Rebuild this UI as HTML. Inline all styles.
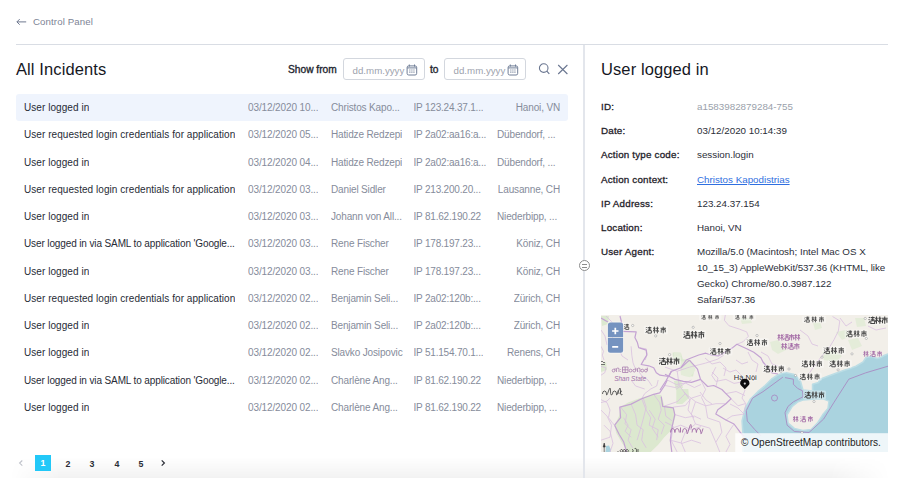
<!DOCTYPE html>
<html><head><meta charset="utf-8">
<style>
*{box-sizing:border-box;margin:0;padding:0}
html,body{width:900px;height:478px;overflow:hidden;background:#fff}
body{position:relative;font-family:"Liberation Sans",sans-serif;color:#272b36}
.abs{position:absolute;white-space:nowrap}
#back{left:16px;top:15.3px;font-size:9.7px;letter-spacing:0.1px;color:#7d8495;line-height:14px}
#back svg{position:absolute;left:0;top:2px}
#back span{position:absolute;left:17px;top:0}
#hr{left:16px;top:44px;width:872px;height:1px;background:#d9dde4}
#vr{left:583px;top:45px;width:2px;height:433px;background:#e3e6ec}
#handle{left:579px;top:260px;width:11px;height:11px;border:1px solid #8c8c8c;border-radius:50%;background:#fff}
#handle:before,#handle:after{content:"";position:absolute;left:2px;width:5px;height:1px;background:#8c8c8c}
#handle:before{top:3px}#handle:after{top:6px}
h1{position:absolute;font-weight:normal;font-size:16.5px;letter-spacing:0.1px;color:#16181f;line-height:20px;white-space:nowrap}
#t1{left:16px;top:59px}
#t2{left:601px;top:59px}
#showfrom{left:288px;top:64px;font-size:10.2px;color:#23262f;line-height:12px;-webkit-text-stroke:0.35px #23262f}
#to{left:430px;top:64px;font-size:10.2px;color:#23262f;line-height:12px;-webkit-text-stroke:0.35px #23262f}
.inp{position:absolute;top:58px;width:82px;height:22px;border:1px solid #d3d7de;border-radius:3px;background:#fff}
.inp span{position:absolute;left:8.6px;top:5.6px;font-size:9.7px;color:#9da2ad;line-height:12px}
.inp svg{position:absolute;left:61.8px;top:4.6px}
#inp1{left:343px}#inp2{left:444px}
.row{position:absolute;left:16px;width:552px;height:27px;font-size:10px;line-height:27px;border-radius:3px}
.row.sel{background:#eff4fd}
.row div{position:absolute;top:0;white-space:nowrap;overflow:hidden}
.c1{left:8px;color:#272b36;letter-spacing:0.06px}
.c2{left:232px;color:#868c9b;letter-spacing:-0.12px}
.c3{left:315px;color:#868c9b;letter-spacing:-0.15px}
.c4{left:397.5px;color:#868c9b;letter-spacing:-0.2px}
.c5{right:8px;color:#868c9b;text-align:right;letter-spacing:-0.15px}
.c5.tr{right:auto;left:481px;text-align:left}
#pag{left:0;top:455px;height:16px;width:200px}
.pg{position:absolute;top:455.5px;width:16px;height:16px;line-height:16px;text-align:center;font-size:8.8px;font-weight:bold;color:#2a2d36}
.pg.act{background:#22c8f8;color:#fff;top:455px}
.lbl{position:absolute;left:601px;font-size:9.8px;letter-spacing:0.2px;color:#1f222a;line-height:12px;white-space:nowrap;-webkit-text-stroke:0.3px #1f222a}
.val{position:absolute;left:697px;font-size:9.8px;color:#2b2e38;line-height:16px;white-space:nowrap}
#map{position:absolute;left:601px;top:315px;width:287px;height:137px;overflow:hidden;background:#f2efe9}
#shade{left:10px;top:457px;width:880px;height:21px;background:linear-gradient(rgba(0,0,0,0),rgba(0,0,0,0.05));-webkit-mask-image:linear-gradient(to right,transparent,#000 50px,#000 820px,transparent);mask-image:linear-gradient(to right,transparent,#000 50px,#000 820px,transparent)}
</style></head><body>
<div id="shade" class="abs"></div>
<div id="back" class="abs"><svg width="11" height="10" viewBox="0 0 11 10"><path d="M3.7 2.1L0.9 4.9L3.7 7.7M0.9 4.9H10.2" fill="none" stroke="#6f7890" stroke-width="1"/></svg><span>Control Panel</span></div>
<div id="hr" class="abs"></div>
<div id="vr" class="abs"></div>
<div id="handle" class="abs"></div>

<h1 id="t1">All Incidents</h1>
<div id="showfrom" class="abs">Show from</div>
<div class="inp" id="inp1"><span>dd.mm.yyyy</span><svg width="12" height="12" viewBox="0 0 12 12"><rect x="1.1" y="1.9" width="9.6" height="9.1" rx="1.6" fill="none" stroke="#6f7d96" stroke-width="1"/><path d="M1.1 3.9H10.7M3.3 0.5V2.6M8.5 0.5V2.6" stroke="#6f7d96" stroke-width="1"/><path d="M3.3 5.4h1.1v1.1h-1.1zM5.35 5.4h1.1v1.1h-1.1zM7.4 5.4h1.1v1.1h-1.1zM3.3 7.6h1.1v1.1h-1.1zM5.35 7.6h1.1v1.1h-1.1zM7.4 7.6h1.1v1.1h-1.1z" fill="#6f7d96"/></svg></div>
<div id="to" class="abs">to</div>
<div class="inp" id="inp2"><span>dd.mm.yyyy</span><svg width="12" height="12" viewBox="0 0 12 12"><rect x="1.1" y="1.9" width="9.6" height="9.1" rx="1.6" fill="none" stroke="#6f7d96" stroke-width="1"/><path d="M1.1 3.9H10.7M3.3 0.5V2.6M8.5 0.5V2.6" stroke="#6f7d96" stroke-width="1"/><path d="M3.3 5.4h1.1v1.1h-1.1zM5.35 5.4h1.1v1.1h-1.1zM7.4 5.4h1.1v1.1h-1.1zM3.3 7.6h1.1v1.1h-1.1zM5.35 7.6h1.1v1.1h-1.1zM7.4 7.6h1.1v1.1h-1.1z" fill="#6f7d96"/></svg></div>
<svg class="abs" style="left:538px;top:62px" width="14" height="14" viewBox="0 0 14 14"><circle cx="5.7" cy="6.1" r="4.3" fill="none" stroke="#6a7690" stroke-width="1.1"/><path d="M8.8 9.2L11.3 11.9" stroke="#6a7690" stroke-width="1.2"/></svg>
<svg class="abs" style="left:557px;top:64px" width="11" height="11" viewBox="0 0 11 11"><path d="M1.2 1L10.4 10M10.4 1L1.2 10" stroke="#6a7690" stroke-width="1.1"/></svg>

<div id="rows">
<div class="row sel" style="top:94.00px"><div class="c1">User logged in</div><div class="c2">03/12/2020 10...</div><div class="c3">Christos Kapo...</div><div class="c4">IP 123.24.37.1...</div><div class="c5">Hanoi, VN</div></div>
<div class="row" style="top:121.27px"><div class="c1">User requested login credentials for application</div><div class="c2">03/12/2020 05...</div><div class="c3">Hatidze Redzepi</div><div class="c4">IP 2a02:aa16:a...</div><div class="c5 tr">Dübendorf, ...</div></div>
<div class="row" style="top:148.54px"><div class="c1">User logged in</div><div class="c2">03/12/2020 04...</div><div class="c3">Hatidze Redzepi</div><div class="c4">IP 2a02:aa16:a...</div><div class="c5 tr">Dübendorf, ...</div></div>
<div class="row" style="top:175.81px"><div class="c1">User requested login credentials for application</div><div class="c2">03/12/2020 03...</div><div class="c3">Daniel Sidler</div><div class="c4">IP 213.200.20...</div><div class="c5">Lausanne, CH</div></div>
<div class="row" style="top:203.08px"><div class="c1">User logged in</div><div class="c2">03/12/2020 03...</div><div class="c3">Johann von All...</div><div class="c4">IP 81.62.190.22</div><div class="c5 tr">Niederbipp, ...</div></div>
<div class="row" style="top:230.35px"><div class="c1" style="letter-spacing:-0.12px">User logged in via SAML to application 'Google...</div><div class="c2">03/12/2020 03...</div><div class="c3">Rene Fischer</div><div class="c4">IP 178.197.23...</div><div class="c5">Köniz, CH</div></div>
<div class="row" style="top:257.62px"><div class="c1">User logged in</div><div class="c2">03/12/2020 03...</div><div class="c3">Rene Fischer</div><div class="c4">IP 178.197.23...</div><div class="c5">Köniz, CH</div></div>
<div class="row" style="top:284.89px"><div class="c1">User requested login credentials for application</div><div class="c2">03/12/2020 02...</div><div class="c3">Benjamin Seli...</div><div class="c4">IP 2a02:120b:...</div><div class="c5">Zürich, CH</div></div>
<div class="row" style="top:312.16px"><div class="c1">User logged in</div><div class="c2">03/12/2020 02...</div><div class="c3">Benjamin Seli...</div><div class="c4">IP 2a02:120b:...</div><div class="c5">Zürich, CH</div></div>
<div class="row" style="top:339.43px"><div class="c1">User logged in</div><div class="c2">03/12/2020 02...</div><div class="c3">Slavko Josipovic</div><div class="c4">IP 51.154.70.1...</div><div class="c5">Renens, CH</div></div>
<div class="row" style="top:366.70px"><div class="c1" style="letter-spacing:-0.12px">User logged in via SAML to application 'Google...</div><div class="c2">03/12/2020 02...</div><div class="c3">Charlène Ang...</div><div class="c4">IP 81.62.190.22</div><div class="c5 tr">Niederbipp, ...</div></div>
<div class="row" style="top:393.97px"><div class="c1">User logged in</div><div class="c2">03/12/2020 02...</div><div class="c3">Charlène Ang...</div><div class="c4">IP 81.62.190.22</div><div class="c5 tr">Niederbipp, ...</div></div>
</div>

<h1 id="t2">User logged in</h1>
<div class="lbl" style="top:101.31px">ID:</div><div class="val" style="top:99.31px;color:#9a9fab">a1583982879284-755</div>
<div class="lbl" style="top:125.39px">Date:</div><div class="val" style="top:123.39px;">03/12/2020 10:14:39</div>
<div class="lbl" style="top:149.47px">Action type code:</div><div class="val" style="top:147.47px;">session.login</div>
<div class="lbl" style="top:173.55px">Action context:</div><div class="val" style="top:171.55px;color:#2f6fe0;text-decoration:underline">Christos Kapodistrias</div>
<div class="lbl" style="top:197.63px">IP Address:</div><div class="val" style="top:195.63px;">123.24.37.154</div>
<div class="lbl" style="top:221.71px">Location:</div><div class="val" style="top:219.71px;">Hanoi, VN</div>
<div class="lbl" style="top:245.79px">User Agent:</div><div class="val" style="top:243.79px;">Mozilla/5.0 (Macintosh; Intel Mac OS X<br><span style="letter-spacing:-0.1px">10_15_3) AppleWebKit/537.36 (KHTML, like</span><br>Gecko) Chrome/80.0.3987.122<br>Safari/537.36</div>
<div id="map"><svg width="287" height="137" viewBox="601 315 287 137" style="position:absolute;left:0;top:0">
<rect x="601" y="315" width="287" height="137" fill="#f2efe9"/>
<polygon points="614.6,425.2 619.1,416.1 620.6,407.1 628.1,402.6 640.2,398.1 653.7,394.3 661.2,395.1 664.3,405.6 673.3,407.1 675.5,416.1 671.8,429.7 664.3,437.2 658.2,444.8 650.7,452.0 628.1,452.0 622.1,443.3 616.1,432.7" fill="#dce8cf"/>
<polygon points="676.3,389.0 688.3,389.0 689.1,398.1 682.3,404.1 676.3,404.1" fill="#dce9d0"/>
<polygon points="672.6,352.6 681.0,353.0 683.0,360.0 678.0,362.0 673.0,358.0" fill="#dce9d0"/>
<polygon points="681.0,358.9 690.0,360.0 694.8,368.0 693.0,376.5 684.0,376.0 681.0,370.0" fill="#dce9d0"/>
<polygon points="673.8,381.0 681.0,380.2 683.0,388.0 676.0,390.0" fill="#dce9d0"/>
<polygon points="601.0,316.0 609.0,316.0 608.0,324.0 602.0,326.0" fill="#dce9d0"/>
<polygon points="601.0,365.0 606.0,362.0 607.0,370.0 601.0,372.0" fill="#dce9d0"/>
<polygon points="836.0,332.0 846.0,330.0 850.0,336.0 842.0,340.0" fill="#e4ecd9"/>
<polygon points="822.0,352.0 834.0,350.0 842.0,356.0 836.0,362.0 824.0,360.0" fill="#e4ecd9"/>
<polygon points="848.0,340.0 858.0,338.0 862.0,346.0 852.0,350.0" fill="#e4ecd9"/>
<polygon points="770.0,342.0 778.0,340.0 786.0,350.0 778.0,354.0 772.0,350.0" fill="#e4ecd9"/>
<polygon points="813.0,323.0 820.0,322.0 822.0,328.0 815.0,330.0" fill="#e4ecd9"/>
<polygon points="855.0,318.0 864.0,318.0 866.0,326.0 857.0,327.0" fill="#e4ecd9"/>
<polygon points="740.0,318.0 750.0,318.0 752.0,323.0 742.0,324.0" fill="#e4ecd9"/>
<polygon points="679.2,361.1 690.0,362.0 695.5,370.0 690.0,377.3 681.0,375.0" fill="#e4ecd9"/>
<polygon points="673.8,352.3 680.9,352.5 680.9,356.8 674.0,356.8" fill="#e4ecd9"/>
<polygon points="743.0,452.0 743.1,435.7 742.1,421.0 745.2,408.5 750.5,399.0 757.8,391.7 765.1,385.5 771.4,379.2 777.7,375.0 785.0,372.5 793.4,374.2 795.5,375.5 799.2,379.2 800.0,379.6 801.3,384.2 803.0,390.1 812.6,391.0 812.6,384.2 818.5,382.6 820.1,379.2 828.5,375.9 835.2,373.4 845.0,370.0 848.6,369.0 855.9,366.2 863.2,361.9 866.0,357.5 872.0,356.5 877.0,358.5 880.8,357.5 884.0,355.5 888.0,354.0 889.0,354.0 889.0,453.0 743.0,453.0" fill="#aad3df" stroke="#bcdde5" stroke-width="1.6" stroke-linejoin="round"/>
<polygon points="802.8,400.1 815.3,399.1 823.7,399.1 828.9,401.2 827.9,408.5 822.6,414.8 817.4,423.1 811.1,429.4 802.8,430.5 794.4,428.4 788.1,423.1 787.1,414.8 792.3,406.4 797.5,402.2" fill="#f2efe9" stroke="#bcdde5" stroke-width="1.4" stroke-linejoin="round"/>
<polygon points="606,446 609,445.5 611,450 610.5,452 605.5,452" fill="#aad3df"/>
<path d="M631.1 346.3 L631.8 355.1 L633.0 362.7 L634.9 367.7 L638.7 371.4 L642.0 376.0 L648.0 380.0 L652.0 386.0" fill="none" stroke="#d9c0e0" stroke-width="0.8"/>
<path d="M601.0 346.3 L603.5 351.3 L602.3 355.1 L604.0 360.0" fill="none" stroke="#d9c0e0" stroke-width="0.8"/>
<path d="M601.0 366.4 L606.0 367.7 L604.8 372.7 L601.0 375.2" fill="none" stroke="#d9c0e0" stroke-width="0.8"/>
<path d="M601.0 330.0 L605.0 336.0 L607.0 345.0" fill="none" stroke="#d9c0e0" stroke-width="0.8"/>
<path d="M640.0 347.9 L646.2 348.8 L647.1 354.1 L645.3 360.0" fill="none" stroke="#d9c0e0" stroke-width="0.8"/>
<path d="M725.3 315.0 L724.4 320.3 L728.9 325.7 L739.6 329.2 L746.7 331.9 L748.4 336.3 L743.1 341.7 L736.9 344.3" fill="none" stroke="#d9c0e0" stroke-width="0.8"/>
<path d="M761.0 352.0 L768.0 356.0 L772.0 364.0 L778.0 366.0" fill="none" stroke="#d9c0e0" stroke-width="0.8"/>
<path d="M665.0 367.2 L677.2 371.2 L689.4 367.2 L705.6 363.1 L717.8 359.1 L723.9 355.0" fill="none" stroke="#d9c0e0" stroke-width="0.8"/>
<path d="M677.2 371.2 L679.2 385.5 L685.3 393.6 L677.2 401.7 L665.0 405.8" fill="none" stroke="#d9c0e0" stroke-width="0.8"/>
<path d="M685.3 393.6 L695.5 401.7 L705.6 405.8 L715.8 403.7 L725.9 403.7" fill="none" stroke="#d9c0e0" stroke-width="0.8"/>
<path d="M695.5 401.7 L691.4 413.9 L695.5 424.0 L685.3 432.2 L681.2 442.3 L685.3 452.1" fill="none" stroke="#d9c0e0" stroke-width="0.8"/>
<path d="M705.6 405.8 L707.6 417.9 L719.8 422.0 L721.9 432.2 L715.8 442.3 L719.8 452.1" fill="none" stroke="#d9c0e0" stroke-width="0.8"/>
<path d="M700.5 379.4 L705.6 389.5 L701.5 397.6 L705.6 405.8" fill="none" stroke="#d9c0e0" stroke-width="0.8"/>
<path d="M715.8 367.2 L711.7 375.3 L715.8 381.4 L725.9 379.4 L734.0 383.4 L745.0 381.4" fill="none" stroke="#d9c0e0" stroke-width="0.8"/>
<path d="M725.9 393.6 L736.1 391.5 L745.0 395.6" fill="none" stroke="#d9c0e0" stroke-width="0.8"/>
<path d="M731.0 398.7 L738.1 405.8 L745.0 403.7" fill="none" stroke="#d9c0e0" stroke-width="0.8"/>
<path d="M725.9 420.0 L732.0 415.9 L745.0 413.9" fill="none" stroke="#d9c0e0" stroke-width="0.8"/>
<path d="M734.0 424.0 L725.9 436.2 L730.0 444.3 L725.9 452.1" fill="none" stroke="#d9c0e0" stroke-width="0.8"/>
<path d="M695.5 424.0 L709.7 428.1 L715.8 442.3" fill="none" stroke="#d9c0e0" stroke-width="0.8"/>
<path d="M665.0 385.5 L675.2 387.5 L679.2 385.5" fill="none" stroke="#d9c0e0" stroke-width="0.8"/>
<path d="M665.0 422.0 L673.1 426.1 L671.1 440.3 L677.2 452.1" fill="none" stroke="#d9c0e0" stroke-width="0.8"/>
<path d="M740.1 432.2 L745.0 440.3" fill="none" stroke="#d9c0e0" stroke-width="0.8"/>
<path d="M745.0 390.0 L742.0 398.0 L746.0 404.0 L744.0 412.0" fill="none" stroke="#d9c0e0" stroke-width="0.8"/>
<path d="M723.0 368.0 L730.0 372.0 L736.0 370.0 L742.0 376.0" fill="none" stroke="#d9c0e0" stroke-width="0.8"/>
<path d="M705.0 358.0 L712.0 364.0 L720.0 362.0 L726.0 368.0 L724.0 376.0" fill="none" stroke="#d9c0e0" stroke-width="0.8"/>
<path d="M623.6 417.7 L628.1 425.2 L625.1 431.2 L631.1 437.2" fill="none" stroke="#d9c0e0" stroke-width="0.8"/>
<path d="M643.2 398.1 L646.2 407.1 L643.2 419.2 L640.2 429.7 L637.1 440.2" fill="none" stroke="#d9c0e0" stroke-width="0.8"/>
<path d="M649.2 410.1 L655.2 419.2 L652.2 428.2 L658.2 437.2" fill="none" stroke="#d9c0e0" stroke-width="0.8"/>
<path d="M601.0 440.2 L610.0 437.2 L611.5 425.2 L607.0 416.1 L601.0 410.1" fill="none" stroke="#d9c0e0" stroke-width="0.8"/>
<path d="M667.3 380.0 L676.3 384.5 L685.3 383.0 L691.4 380.0" fill="none" stroke="#d9c0e0" stroke-width="0.8"/>
<path d="M601.0 402.6 L607.0 401.1 L610.0 398.1" fill="none" stroke="#d9c0e0" stroke-width="0.8"/>
<path d="M601.0 399.6 L607.0 402.6 L610.0 410.1 L608.5 417.7 L613.0 423.7 L614.6 425.2" fill="none" stroke="#d9c0e0" stroke-width="0.8"/>
<path d="M604.0 425.2 L610.0 431.2 L613.0 443.3 L610.0 452.0" fill="none" stroke="#d9c0e0" stroke-width="0.8"/>
<path d="M620.6 407.1 L626.6 414.6 L625.1 423.7 L631.1 429.7 L628.1 440.2 L632.6 447.8" fill="none" stroke="#d9c0e0" stroke-width="0.8"/>
<path d="M631.1 404.1 L635.6 414.6 L637.1 425.2 L643.2 429.7 L641.7 440.2 L646.2 447.8" fill="none" stroke="#d9c0e0" stroke-width="0.8"/>
<path d="M641.7 398.8 L646.2 410.1 L650.7 417.7 L649.2 425.2 L658.2 429.7 L656.7 440.2" fill="none" stroke="#d9c0e0" stroke-width="0.8"/>
<path d="M653.7 394.3 L659.7 402.6 L661.2 410.1 L658.2 419.2 L664.3 425.2 L661.2 434.2" fill="none" stroke="#d9c0e0" stroke-width="0.8"/>
<path d="M664.3 405.6 L665.8 416.1 L671.8 420.7" fill="none" stroke="#d9c0e0" stroke-width="0.8"/>
<path d="M673.3 407.1 L685.3 405.6 L691.4 398.1 L701.0 395.1" fill="none" stroke="#d9c0e0" stroke-width="0.8"/>
<path d="M674.8 414.6 L685.3 417.7 L694.4 416.1 L701.0 419.2" fill="none" stroke="#d9c0e0" stroke-width="0.8"/>
<path d="M671.8 428.2 L680.8 425.2 L691.4 429.7 L701.0 426.7" fill="none" stroke="#d9c0e0" stroke-width="0.8"/>
<path d="M670.3 440.2 L682.3 443.3 L691.4 440.2 L701.0 443.3" fill="none" stroke="#d9c0e0" stroke-width="0.8"/>
<path d="M676.3 389.0 L685.3 383.0 L694.4 387.5 L701.0 384.5" fill="none" stroke="#d9c0e0" stroke-width="0.8"/>
<path d="M658.2 380.0 L656.7 386.0 L650.7 389.0 L644.7 393.6 L641.7 398.8" fill="none" stroke="#d9c0e0" stroke-width="0.8"/>
<path d="M631.1 380.0 L635.6 386.0 L644.7 389.0" fill="none" stroke="#d9c0e0" stroke-width="0.8"/>
<path d="M606.0 316.0 L612.0 322.0 L614.0 330.0 L612.0 340.0 L618.0 346.0 L622.0 356.0 L628.0 360.0" fill="none" stroke="#d9c0e0" stroke-width="0.8"/>
<path d="M748.0 352.0 L752.0 360.0 L758.0 364.0 L756.0 372.0" fill="none" stroke="#d9c0e0" stroke-width="0.8"/>
<path d="M736.0 360.0 L742.0 364.0 L748.0 362.0" fill="none" stroke="#d9c0e0" stroke-width="0.8"/>
<path d="M712.0 372.0 L718.0 378.0 L716.0 386.0" fill="none" stroke="#d9c0e0" stroke-width="0.8"/>
<path d="M730.0 404.0 L738.0 408.0 L744.0 414.0" fill="none" stroke="#d9c0e0" stroke-width="0.8"/>
<path d="M700.0 392.0 L706.0 400.0 L712.0 404.0" fill="none" stroke="#d9c0e0" stroke-width="0.8"/>
<path d="M684.0 392.0 L690.0 400.0 L688.0 410.0 L694.0 418.0" fill="none" stroke="#d9c0e0" stroke-width="0.8"/>
<path d="M800.0 330.0 L808.0 336.0 L812.0 344.0 L818.0 346.0" fill="none" stroke="#d9c0e0" stroke-width="0.8"/>
<path d="M840.0 318.0 L846.0 326.0 L852.0 322.0" fill="none" stroke="#d9c0e0" stroke-width="0.8"/>
<path d="M832.5 316.5 L839.8 320.9 L838.3 331.1 L833.9 339.9 L829.5 347.2 L820.7 357.5 L812.0 369.2 L809.0 373.6" fill="none" stroke="#d9c0e0" stroke-width="0.8"/>
<path d="M868.0 326.0 L876.0 330.0 L886.0 328.0" fill="none" stroke="#d9c0e0" stroke-width="0.8"/>
<path d="M601.0 318.0 L608.0 322.0" fill="none" stroke="#c4a3d3" stroke-width="1.2" stroke-linejoin="round"/>
<path d="M622.4 331.3 L636.2 331.9 L634.9 337.5 L637.4 342.6 L638.7 347.6 L646.2 350.1 L646.8 355.1 L643.7 360.1 L641.2 364.5 L648.7 365.8 L653.7 367.7 L656.3 372.7 L660.0 375.2 L668.8 376.5 L671.3 371.4 L681.0 367.7 L686.2 360.0 L691.6 357.7 L698.7 355.0 L705.8 353.2 L711.1 355.0 L718.2 355.9 L723.6 353.2 L727.1 350.6 L732.4 347.9 L736.9 344.3 L746.7 348.8 L753.8 352.3 L760.9 357.7 L763.0 362.0 L768.0 368.0 L772.0 373.0 L778.0 374.0" fill="none" stroke="#c4a3d3" stroke-width="1.2" stroke-linejoin="round"/>
<path d="M620.0 316.0 L622.0 324.0 L622.4 331.3" fill="none" stroke="#c4a3d3" stroke-width="1.2" stroke-linejoin="round"/>
<path d="M671.3 371.4 L666.3 380.2 L660.0 390.0" fill="none" stroke="#c4a3d3" stroke-width="1.2" stroke-linejoin="round"/>
<path d="M614.6 425.2 L620.6 417.7 L619.8 407.1 L631.1 404.1 L641.7 398.8 L653.7 394.3 L659.7 392.8 L664.3 386.0 L667.3 380.0" fill="none" stroke="#c4a3d3" stroke-width="1.2" stroke-linejoin="round"/>
<path d="M661.2 396.6 L662.7 406.4 L673.3 407.9 L674.8 414.6 L671.8 428.2 L670.3 440.2 L671.8 452.0" fill="none" stroke="#c4a3d3" stroke-width="1.2" stroke-linejoin="round"/>
<path d="M614.6 425.2 L619.1 434.2 L623.6 441.7 L626.6 452.0" fill="none" stroke="#c4a3d3" stroke-width="1.2" stroke-linejoin="round"/>
<path d="M681.0 367.7 L689.4 360.1" fill="none" stroke="#c4a3d3" stroke-width="1.2" stroke-linejoin="round"/>
<path d="M689.4 360.1 L697.5 369.2 L700.5 379.4 L707.6 386.5 L713.7 385.5 L721.9 389.5 L725.9 393.6 L731.0 398.7 L725.9 403.7 L717.8 409.8 L715.8 413.9 L725.9 420.0 L734.0 424.0 L740.1 432.2 L744.2 436.2" fill="none" stroke="#c4a3d3" stroke-width="1.2" stroke-linejoin="round"/>
<path d="M665.0 374.3 L675.2 379.4 L683.3 381.4 L691.4 382.4 L700.5 379.4" fill="none" stroke="#c4a3d3" stroke-width="1.2" stroke-linejoin="round"/>
<path d="M782.9 377.1 L763.0 391.7 L752.6 398.0 L746.3 410.6 L747.3 421.0 L754.6 429.4 L760.9 435.7" fill="none" stroke="#a88bc3" stroke-width="0.9"/>
<path d="M785.0 377.6 L793.4 379.2 L793.4 384.2 L797.6 388.4 L802.6 390.9 L803.0 396.8 L793.4 401.8 L788.0 406.4 L785.0 412.7 L787.1 425.2 L794.4 431.5 L809.0 432.5 L823.7 419.0 L834.1 402.2 L848.8 379.2 L865.5 372.9 L890.0 365.6" fill="none" stroke="#a88bc3" stroke-width="0.9"/>
<circle cx="774.5" cy="398" r="3" fill="none" stroke="#a88bc3" stroke-width="0.9"/>
<defs><g id="g0444444" fill="none" stroke="#444444" stroke-width="0.95"><path d="M3 0V1.3M0.3 1.6H5.7M1 2.9H5V5.6M1 2.9V6M3 1.6V6.6"/></g><g id="g1444444" fill="none" stroke="#444444" stroke-width="0.95"><path d="M0.2 1.6H2.7M1.5 0V6.6M0.3 4.7L1.4 2.6M1.6 2.6L2.6 4M3.2 1.6H5.8M4.5 0V6.6M3.2 5L4.4 2.8M4.6 2.8L5.8 5"/></g><g id="g2444444" fill="none" stroke="#444444" stroke-width="0.95"><path d="M0.5 0.5L1.3 1.3M0.3 2.6L1.2 3.2M0.3 6.2L1.3 4.3M2.1 0.9H5.8M2.3 2.4H5.6M2.2 3.9H5.8V6.4H2.3V3.9M4 0V3.9"/></g><g id="g0a36aa6" fill="none" stroke="#a36aa6" stroke-width="0.9"><path d="M3 0V1.3M0.3 1.6H5.7M1 2.9H5V5.6M1 2.9V6M3 1.6V6.6"/></g><g id="g1a36aa6" fill="none" stroke="#a36aa6" stroke-width="0.9"><path d="M0.2 1.6H2.7M1.5 0V6.6M0.3 4.7L1.4 2.6M1.6 2.6L2.6 4M3.2 1.6H5.8M4.5 0V6.6M3.2 5L4.4 2.8M4.6 2.8L5.8 5"/></g><g id="g2a36aa6" fill="none" stroke="#a36aa6" stroke-width="0.9"><path d="M0.5 0.5L1.3 1.3M0.3 2.6L1.2 3.2M0.3 6.2L1.3 4.3M2.1 0.9H5.8M2.3 2.4H5.6M2.2 3.9H5.8V6.4H2.3V3.9M4 0V3.9"/></g></defs>
<rect x="615.4" y="322.8" width="15.2" height="7.8" rx="1.5" fill="#fff" opacity="0.35"/><use href="#g1444444" transform="translate(617.06,323.80) scale(0.879)"/><use href="#g2444444" transform="translate(623.66,323.80) scale(0.879)"/>
<rect x="643.9" y="325.7" width="24.0" height="8.6" rx="1.5" fill="#fff" opacity="0.35"/><use href="#g2444444" transform="translate(645.57,326.70) scale(1.000)"/><use href="#g1444444" transform="translate(652.90,326.70) scale(1.000)"/><use href="#g0444444" transform="translate(660.23,326.70) scale(1.000)"/>
<rect x="682.0" y="330.0" width="24.0" height="9.4" rx="1.5" fill="#fff" opacity="0.35"/><use href="#g2444444" transform="translate(683.30,331.00) scale(1.121)"/><use href="#g1444444" transform="translate(690.64,331.00) scale(1.121)"/><use href="#g0444444" transform="translate(697.97,331.00) scale(1.121)"/>
<rect x="657.8" y="356.5" width="23.2" height="9.3" rx="1.5" fill="#fff" opacity="0.35"/><use href="#g2444444" transform="translate(659.02,357.50) scale(1.106)"/><use href="#g1444444" transform="translate(666.08,357.50) scale(1.106)"/><use href="#g0444444" transform="translate(673.15,357.50) scale(1.106)"/>
<rect x="699.0" y="314.0" width="22.5" height="6.4" rx="1.5" fill="#fff" opacity="0.35"/><use href="#g2444444" transform="translate(701.42,315.00) scale(0.667)"/><use href="#g1444444" transform="translate(708.25,315.00) scale(0.667)"/><use href="#g0444444" transform="translate(715.08,315.00) scale(0.667)"/>
<rect x="732.7" y="314.0" width="23.2" height="6.4" rx="1.5" fill="#fff" opacity="0.35"/><use href="#g2444444" transform="translate(735.23,315.00) scale(0.667)"/><use href="#g1444444" transform="translate(742.30,315.00) scale(0.667)"/><use href="#g0444444" transform="translate(749.37,315.00) scale(0.667)"/>
<rect x="708.5" y="347.0" width="24.0" height="8.5" rx="1.5" fill="#fff" opacity="0.35"/><use href="#g2444444" transform="translate(710.21,348.00) scale(0.985)"/><use href="#g1444444" transform="translate(717.55,348.00) scale(0.985)"/><use href="#g0444444" transform="translate(724.88,348.00) scale(0.985)"/>
<rect x="745.1" y="338.2" width="24.0" height="8.5" rx="1.5" fill="#fff" opacity="0.35"/><use href="#g2444444" transform="translate(746.81,339.20) scale(0.985)"/><use href="#g1444444" transform="translate(754.15,339.20) scale(0.985)"/><use href="#g0444444" transform="translate(761.48,339.20) scale(0.985)"/>
<rect x="762.0" y="364.5" width="24.0" height="8.6" rx="1.5" fill="#fff" opacity="0.35"/><use href="#g2444444" transform="translate(763.67,365.50) scale(1.000)"/><use href="#g1444444" transform="translate(771.00,365.50) scale(1.000)"/><use href="#g0444444" transform="translate(778.33,365.50) scale(1.000)"/>
<rect x="802.2" y="315.5" width="23.9" height="7.8" rx="1.5" fill="#fff" opacity="0.35"/><use href="#g2444444" transform="translate(804.21,316.50) scale(0.879)"/><use href="#g1444444" transform="translate(811.51,316.50) scale(0.879)"/><use href="#g0444444" transform="translate(818.81,316.50) scale(0.879)"/>
<rect x="867.3" y="315.5" width="21.7" height="9.3" rx="1.5" fill="#fff" opacity="0.35"/><use href="#g2444444" transform="translate(868.27,316.50) scale(1.106)"/><use href="#g1444444" transform="translate(874.83,316.50) scale(1.106)"/><use href="#g0444444" transform="translate(881.40,316.50) scale(1.106)"/>
<rect x="844.6" y="329.4" width="24.0" height="8.6" rx="1.5" fill="#fff" opacity="0.35"/><use href="#g2444444" transform="translate(846.27,330.40) scale(1.000)"/><use href="#g1444444" transform="translate(853.60,330.40) scale(1.000)"/><use href="#g0444444" transform="translate(860.93,330.40) scale(1.000)"/>
<rect x="822.0" y="346.2" width="23.9" height="8.6" rx="1.5" fill="#fff" opacity="0.35"/><use href="#g2444444" transform="translate(823.65,347.20) scale(1.000)"/><use href="#g1444444" transform="translate(830.95,347.20) scale(1.000)"/><use href="#g0444444" transform="translate(838.25,347.20) scale(1.000)"/>
<rect x="800.0" y="359.4" width="24.0" height="8.6" rx="1.5" fill="#fff" opacity="0.35"/><use href="#g2444444" transform="translate(801.67,360.40) scale(1.000)"/><use href="#g1444444" transform="translate(809.00,360.40) scale(1.000)"/><use href="#g0444444" transform="translate(816.33,360.40) scale(1.000)"/>
<rect x="827.8" y="359.4" width="24.0" height="8.6" rx="1.5" fill="#fff" opacity="0.35"/><use href="#g2444444" transform="translate(829.47,360.40) scale(1.000)"/><use href="#g1444444" transform="translate(836.80,360.40) scale(1.000)"/><use href="#g0444444" transform="translate(844.13,360.40) scale(1.000)"/>
<rect x="798.0" y="372.6" width="23.7" height="8.2" rx="1.5" fill="#fff" opacity="0.35"/><use href="#g2444444" transform="translate(799.80,373.60) scale(0.939)"/><use href="#g1444444" transform="translate(807.03,373.60) scale(0.939)"/><use href="#g0444444" transform="translate(814.27,373.60) scale(0.939)"/>
<rect x="803.0" y="390.5" width="23.0" height="8.8" rx="1.5" fill="#fff" opacity="0.35"/><use href="#g2444444" transform="translate(804.41,391.50) scale(1.030)"/><use href="#g1444444" transform="translate(811.41,391.50) scale(1.030)"/><use href="#g0444444" transform="translate(818.41,391.50) scale(1.030)"/>
<use href="#g1a36aa6" transform="translate(777.45,334.00) scale(0.985)"/><use href="#g2a36aa6" transform="translate(783.05,334.00) scale(0.985)"/><use href="#g0a36aa6" transform="translate(788.65,334.00) scale(0.985)"/><use href="#g1a36aa6" transform="translate(794.25,334.00) scale(0.985)"/>
<use href="#g1a36aa6" transform="translate(781.21,343.00) scale(0.985)"/><use href="#g2a36aa6" transform="translate(787.55,343.00) scale(0.985)"/><use href="#g0a36aa6" transform="translate(793.88,343.00) scale(0.985)"/>
<use href="#g1a36aa6" transform="translate(863.28,350.90) scale(0.879)"/><use href="#g2a36aa6" transform="translate(870.11,350.90) scale(0.879)"/><use href="#g0a36aa6" transform="translate(876.95,350.90) scale(0.879)"/>
<use href="#g1a36aa6" transform="translate(792.94,416.00) scale(0.909)"/><use href="#g2a36aa6" transform="translate(800.27,416.00) scale(0.909)"/><use href="#g0a36aa6" transform="translate(807.61,416.00) scale(0.909)"/>
<circle cx="632.7" cy="325.5" r="1.1" fill="#fff" stroke="#8f8f8f" stroke-width="0.5"/>
<circle cx="655.7" cy="335.9" r="1.1" fill="#fff" stroke="#8f8f8f" stroke-width="0.5"/>
<circle cx="693.2" cy="327.3" r="1.1" fill="#fff" stroke="#8f8f8f" stroke-width="0.5"/>
<circle cx="669.6" cy="354.6" r="1.1" fill="#fff" stroke="#8f8f8f" stroke-width="0.5"/>
<circle cx="720" cy="343.5" r="1.1" fill="#fff" stroke="#8f8f8f" stroke-width="0.5"/>
<circle cx="757" cy="335.5" r="1.1" fill="#fff" stroke="#8f8f8f" stroke-width="0.5"/>
<circle cx="789" cy="369" r="1.1" fill="#fff" stroke="#8f8f8f" stroke-width="0.5"/>
<circle cx="852" cy="353.9" r="1.1" fill="#fff" stroke="#8f8f8f" stroke-width="0.5"/>
<circle cx="822" cy="357.2" r="1.1" fill="#fff" stroke="#8f8f8f" stroke-width="0.5"/>
<circle cx="838.1" cy="369.9" r="1.1" fill="#fff" stroke="#8f8f8f" stroke-width="0.5"/>
<circle cx="866.3" cy="338.4" r="1.1" fill="#fff" stroke="#8f8f8f" stroke-width="0.5"/>
<circle cx="865.2" cy="318.5" r="1.1" fill="#fff" stroke="#8f8f8f" stroke-width="0.5"/>
<circle cx="781" cy="371.3" r="1.1" fill="#fff" stroke="#8f8f8f" stroke-width="0.5"/>
<circle cx="814" cy="401.5" r="1.1" fill="#fff" stroke="#8f8f8f" stroke-width="0.5"/>
<circle cx="802" cy="432.5" r="1.1" fill="#fff" stroke="#8f8f8f" stroke-width="0.5"/>
<circle cx="795.5" cy="375.5" r="1.1" fill="#fff" stroke="#8f8f8f" stroke-width="0.5"/>
<text x="614.2" y="380.6" font-family="Liberation Sans" font-style="italic" font-size="6.8" fill="#a072aa" textLength="32" lengthAdjust="spacingAndGlyphs">Shan State</text>
<g fill="none" stroke="#a678ac" stroke-width="0.75"><circle cx="613.6" cy="370.6" r="1.4"/><path d="M615 370.6v-2.5M616.5 372v-3.5q1.5-1 2.5 0v3.5M620.3 369.5h.8M620.3 371.5h.8"/><path d="M622.5 367h5.5v5.5h-5.5zM622.5 369.8h5.5M625.2 367v5.5"/><circle cx="630.6" cy="370.6" r="1.4"/><circle cx="634.3" cy="370.6" r="1.4"/><path d="M635.8 370.6v-2.8M637.5 372v-3.5q1.5-1 2.5 0v3.5"/><circle cx="642.3" cy="370.6" r="1.4"/><circle cx="645.9" cy="370.6" r="1.4"/><path d="M647.3 370.6v-3"/></g>
<path d="M670.5 432.5q0-4 2.2-4t2.2 4q0-4 2.2-4t2.2 4M680.5 432.5v-5M682.5 432.5q0-4 2.2-4t2.2 4 2.2-4 2.2 0M692 432.5q0-4 2.2-4t2.2 4q0-4 2.2-4t2.2 4 2.2-4" fill="none" stroke="#a06aa6" stroke-width="0.9"/>
<path d="M602.5 394q0-3 2-3t2 3t2-3 2 0 2 3q0-3 2-3t2 3 2-3 2 0 2 3M618 394v-3.5M620 394q0-3 2-3" fill="none" stroke="#3f3f3f" stroke-width="0.8"/>
<g fill="none" stroke="#3a3a3a" stroke-width="0.75"><path d="M621.5 449.5a1.3 1.3 0 1 0 0.01 0M624.3 449.5a1.3 1.3 0 1 0 0.01 0M627.1 449.5a1.3 1.3 0 1 0 0.01 0"/><path d="M629.6 449.8v.1M629.6 451.5v.1M632 449.5a1.3 1.3 0 1 1 0 2.6M634.6 448.5q1.5 -1 2 1.5t-1 2.3M638 449v3.2"/><path d="M617.5 451.6h1"/></g>
<path d="M601 362q1-2 2 0t2 0M601 364.5h4" fill="none" stroke="#555" stroke-width="0.8"/>
<path d="M603.2 447l1 -4 1 4zM604.2 447v5" fill="#333" stroke="#333" stroke-width="0.6"/>
<text x="733.8" y="379.6" font-family="Liberation Sans" font-size="7.3" fill="#2c2c2c" stroke="#fff" stroke-width="1.2" stroke-opacity="0.5" paint-order="stroke" textLength="23" lengthAdjust="spacingAndGlyphs">Hà Nội</text>
<path d="M744.8 389.3C742.6 386.6 740.1 385.2 740.1 383.4A4.7 4.7 0 0 1 749.5 383.4C749.5 385.2 747 386.6 744.8 389.3Z" fill="#0d0d0d"/>
<circle cx="744.8" cy="383.6" r="1.1" fill="#d9d9d9"/>
<rect x="606.9" y="321.6" width="17.2" height="32.2" rx="3" fill="#fff" opacity="0.4"/>
<path d="M610.4 322.6H620.6A2.5 2.5 0 0 1 623.1 325.1V336.9H607.9V325.1A2.5 2.5 0 0 1 610.4 322.6Z" fill="#7593c0"/>
<path d="M607.9 337.7H623.1V350.3A2.5 2.5 0 0 1 620.6 352.8H610.4A2.5 2.5 0 0 1 607.9 350.3Z" fill="#7593c0"/>
<path d="M612.1 331H618.5M615.3 327.8V334.2M612.2 346.8H618.2" stroke="#fff" stroke-width="1.7"/>
<rect x="735.2" y="433.2" width="152.8" height="19" fill="#fff" opacity="0.8"/>
</svg>
<div style="position:absolute;left:140px;top:122px;font-size:10.1px;line-height:12px;color:#1d1d1d;white-space:nowrap">© OpenStreetMap contributors.</div></div><!--endmap-->
<svg class="abs" style="left:18px;top:459px" width="6" height="8" viewBox="0 0 6 8"><path d="M4.3 1.5L1.6 4.1L4.3 6.7" fill="none" stroke="#bfc2ca" stroke-width="1.1"/></svg>
<div class="pg act" style="left:35px">1</div>
<div class="pg" style="left:60px">2</div>
<div class="pg" style="left:84px">3</div>
<div class="pg" style="left:109px">4</div>
<div class="pg" style="left:133px">5</div>
<svg class="abs" style="left:160px;top:459px" width="6" height="8" viewBox="0 0 6 8"><path d="M1.7 1.4L4.4 4L1.7 6.6" fill="none" stroke="#2a2d36" stroke-width="1.2"/></svg>
</body></html>
